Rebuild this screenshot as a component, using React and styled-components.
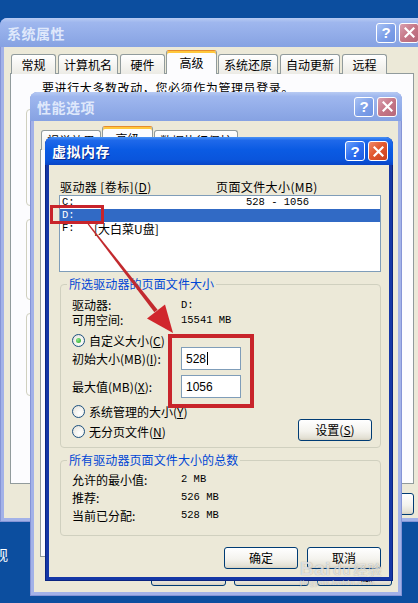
import React from "react";
import styled, { createGlobalStyle } from "styled-components";

const GlobalStyle = createGlobalStyle`
  html, body { margin: 0; padding: 0; background: #0c4e9f; }
  * { box-sizing: border-box; }
`;

const FONT = `"Noto Sans CJK SC", "Liberation Sans", sans-serif`;
const MONO = `"Liberation Mono", "Noto Sans CJK SC", monospace`;

const Desktop = styled.div`
  position: relative;
  width: 418px;
  height: 603px;
  overflow: hidden;
  background: #0c4e9f;
  font-family: ${FONT};
  font-size: 12px;
  color: #000;
`;

const DesktopLabel = styled.div`
  position: absolute;
  left: -6px;
  top: 546px;
  color: #fff;
  font-size: 14px;
  line-height: 16px;
`;

const Window = styled.div`
  position: absolute;
  z-index: ${(p) => p.$z};
  left: ${(p) => p.$x}px;
  top: ${(p) => p.$y}px;
  width: ${(p) => p.$w}px;
  height: ${(p) => p.$h}px;
  display: flex;
  flex-direction: column;
  padding: 0 4px 4px;
  border-radius: 8px 8px 0 0;
  background: ${(p) => (p.$active ? "#1537a6" : "#a3b2e8")};
  box-shadow: ${(p) =>
    p.$active
      ? "inset 1px 0 0 #0a2480, inset -1px 0 0 #0a2480, inset 0 -1px 0 #0a2480"
      : "inset 1px 0 0 #8594d6, inset -1px 0 0 #8594d6, inset 0 -1px 0 #8594d6"};
`;

const TitleBar = styled.div`
  height: ${(p) => p.$h}px;
  margin: 0 -4px;
  padding: 0 5px 0 7px;
  display: flex;
  align-items: center;
  gap: 3px;
  border-radius: 7px 7px 0 0;
  background: ${(p) =>
    p.$active
      ? "linear-gradient(180deg, #4a93f5 0%, #1f69ea 12%, #0b5be3 45%, #0a55dc 80%, #0845c6 100%)"
      : "linear-gradient(180deg, #b8cbf3 0%, #9fb7ee 15%, #93ade9 55%, #86a2e2 100%)"};
`;

const Title = styled.div`
  flex: 1;
  font-weight: bold;
  font-size: 14px;
  letter-spacing: 0.5px;
  color: ${(p) => (p.$active ? "#ffffff" : "#dfe8fb")};
  text-shadow: ${(p) => (p.$active ? "1px 1px 0 #0a2a8a" : "none")};
`;

const CapButton = styled.div`
  width: 20px;
  height: 20px;
  border: 1px solid #ffffff;
  border-radius: 3px;
  display: flex;
  align-items: center;
  justify-content: center;
  color: #fff;
  font: bold 15px "Liberation Sans", sans-serif;
  background: ${(p) => {
    if (p.$kind === "close")
      return p.$active
        ? "linear-gradient(135deg, #f08a6a 0%, #e2582f 45%, #c9401e 100%)"
        : "linear-gradient(135deg, #d9a0b0 0%, #c57686 50%, #b6677a 100%)";
    return p.$active
      ? "linear-gradient(135deg, #6ea2fb 0%, #2e6ff0 50%, #1d5be0 100%)"
      : "linear-gradient(135deg, #a9c2f4 0%, #7d9fe8 55%, #6e92e2 100%)";
  }};
`;

const Body = styled.div`
  flex: 1;
  min-height: 0;
  display: flex;
  flex-direction: column;
  background: #ece9d8;
  padding: ${(p) => p.$pad};
`;

const TabRow = styled.div`
  position: relative;
  z-index: 1;
  display: flex;
  align-items: flex-end;
  gap: 2px;
  height: 23px;
  margin-bottom: -1px;
  padding-left: 1px;
`;

const Tab = styled.div`
  height: ${(p) => (p.$sel ? 24 : 20)}px;
  min-width: ${(p) => (p.$sel ? 51 : 45)}px;
  padding: 0 ${(p) => (p.$sel ? 7 : 5)}px;
  margin: 0 ${(p) => (p.$sel ? -1 : 0)}px;
  display: flex;
  align-items: center;
  justify-content: center;
  border: 1px solid #919b9c;
  border-top-color: ${(p) => (p.$sel ? "#e68b2c" : "#919b9c")};
  border-bottom: none;
  border-radius: 3px 3px 0 0;
  background: ${(p) => (p.$sel ? "#fcfcfe" : "linear-gradient(180deg, #ffffff, #ecebe5)")};
  box-shadow: ${(p) => (p.$sel ? "inset 0 2px 0 #ffc83c" : "none")};
  line-height: 14px;
  white-space: nowrap;
`;

const Panel = styled.div`
  height: ${(p) => p.$h}px;
  background: #fcfcfe;
  border: 1px solid #919b9c;
  display: flex;
  flex-direction: column;
  padding: ${(p) => p.$pad || "0"};
`;

const Notice = styled.div`
  line-height: 16px;
  letter-spacing: 0.6px;
  padding: 6px 0 0 16px;
`;

const Group = styled.fieldset`
  margin: ${(p) => p.$m || "0"};
  padding: ${(p) => p.$pad || "0"};
  height: ${(p) => (p.$h ? `${p.$h}px` : "auto")};
  border: 1px solid #d0d0bf;
  border-radius: 4px;
  min-width: 0;
`;

const Legend = styled.legend`
  margin-left: 6px;
  padding: 0 2px;
  line-height: 14px;
  color: #0046d5;
  letter-spacing: 0.1px;
`;

const ButtonRow = styled.div`
  display: flex;
  justify-content: flex-end;
  gap: ${(p) => p.$gap || 8}px;
  margin-top: ${(p) => p.$mt}px;
`;

const Button = styled.div`
  width: ${(p) => p.$w || 74}px;
  height: 22px;
  display: flex;
  align-items: center;
  justify-content: center;
  border: 1px solid #003c74;
  border-radius: 3px;
  background: linear-gradient(180deg, #ffffff 0%, #f4f3ee 55%, #e3e0d4 90%, #d6d0c0 100%);
  line-height: 14px;
`;

const ListHeader = styled.div`
  display: flex;
  height: 16px;
  line-height: 16px;
  padding-left: 1px;
  letter-spacing: 0.4px;
`;

const HeaderCell = styled.div`
  width: ${(p) => (p.$w ? `${p.$w}px` : "auto")};
  white-space: nowrap;
`;

const ListBox = styled.div`
  height: 77px;
  background: #fff;
  border: 1px solid #7f9db9;
`;

const ListRow = styled.div`
  height: 13px;
  display: grid;
  grid-template-columns: 32px 152px 1fr;
  align-items: center;
  padding-left: 2px;
  background: ${(p) => (p.$sel ? "#316ac5" : "transparent")};
  color: ${(p) => (p.$sel ? "#fff" : "#000")};
  line-height: 13px;
`;

const Mono = styled.span`
  font-family: ${MONO};
  font-size: 10.5px;
`;

const InfoGrid = styled.div`
  display: grid;
  grid-template-columns: 109px 1fr;
  grid-auto-rows: ${(p) => p.$row}px;
  align-items: center;
  padding: ${(p) => p.$pad};
  white-space: nowrap;
`;

const RadioRow = styled.div`
  display: flex;
  align-items: center;
  height: 14px;
  margin-top: ${(p) => p.$mt || 0}px;
  padding-left: 11px;
  white-space: nowrap;
`;

const Radio = styled.span`
  position: relative;
  width: 13px;
  height: 13px;
  margin-right: 4px;
  border-radius: 50%;
  border: 1px solid #1c5180;
  background: radial-gradient(circle at 60% 65%, #ffffff 0%, #f2f1ec 50%, #dcdbd2 100%);
  flex: none;
  &::after {
    content: "";
    display: ${(p) => (p.$on ? "block" : "none")};
    position: absolute;
    left: 3px;
    top: 3px;
    width: 5px;
    height: 5px;
    border-radius: 50%;
    background: radial-gradient(circle at 35% 35%, #8ee88a, #21a121);
  }
`;

const FieldRow = styled.div`
  display: grid;
  grid-template-columns: 109px 60px;
  align-items: center;
  height: 23px;
  margin-top: ${(p) => p.$mt || 0}px;
  padding-left: 11px;
  white-space: nowrap;
`;

const TextBox = styled.div`
  height: 23px;
  background: #fff;
  border: 1px solid #7f9db9;
  padding: 0 4px;
  display: flex;
  align-items: center;
  font-family: "Liberation Sans", sans-serif;
  font-size: 12px;
`;

const Caret = styled.span`
  display: inline-block;
  width: 1px;
  height: 13px;
  margin-left: 1px;
  background: #000;
`;

const BottomBlock = styled.div`
  display: flex;
  justify-content: space-between;
  align-items: flex-end;
  margin-top: 6px;
  padding-right: 8px;
`;

const RadioStack = styled.div`
  display: flex;
  flex-direction: column;
  gap: 6px;
  margin-bottom: 3px;
`;

const Annotation = styled.div`
  position: absolute;
  z-index: 10;
  left: ${(p) => p.$x}px;
  top: ${(p) => p.$y}px;
  width: ${(p) => p.$w}px;
  height: ${(p) => p.$h}px;
  border: ${(p) => p.$b}px solid #c8242b;
  pointer-events: none;
`;

const Overlay = styled.svg`
  position: absolute;
  z-index: 10;
  left: 0;
  top: 0;
  pointer-events: none;
`;

const Watermark = styled.div`
  position: absolute;
  z-index: 11;
  left: 300px;
  top: 558px;
  color: rgba(255, 255, 255, 0.7);
  font: bold 19px "Liberation Sans", sans-serif;
  text-shadow: 0 0 1px rgba(90, 90, 90, 0.6);
  letter-spacing: 0.5px;
  pointer-events: none;
  span {
    font-family: ${FONT};
    font-size: 14px;
    font-weight: normal;
    margin-left: 2px;
  }
  div {
    font: 8px "Liberation Sans", sans-serif;
    letter-spacing: 0.6px;
    margin-top: -2px;
    color: rgba(255, 255, 255, 0.7);
  }
`;

function Caption({ active }) {
  return (
    <>
      <CapButton $kind="help" $active={active}>?</CapButton>
      <CapButton $kind="close" $active={active}>
        <svg width="11" height="11" viewBox="0 0 11 11">
          <path d="M1.5 1.5 L9.5 9.5 M9.5 1.5 L1.5 9.5" stroke="#fff" strokeWidth="2.2" strokeLinecap="square" />
        </svg>
      </CapButton>
    </>
  );
}

const sysTabs = ["常规", "计算机名", "硬件", "高级", "系统还原", "自动更新", "远程"];
const perfTabs = ["视觉效果", "高级", "数据执行保护"];

export default function App() {
  return (
    <Desktop>
      <GlobalStyle />
      <DesktopLabel>观</DesktopLabel>

      {/* 系统属性 */}
      <Window $z={1} $x={0} $y={18} $w={424} $h={504}>
        <TitleBar $h={29}>
          <Title>系统属性</Title>
          <Caption />
        </TitleBar>
        <Body $pad="4px 6px 0 6px">
          <TabRow>
            {sysTabs.map((t) => (
              <Tab key={t} $sel={t === "高级"}>{t}</Tab>
            ))}
          </TabRow>
          <Panel $h={411} $pad="0 12px 0 15px">
            <Notice>要进行大多数改动，您必须作为管理员登录。</Notice>
            <Group $m="6px 0 0" $h={104}><Legend>性能</Legend></Group>
            <Group $m="6px 0 0" $h={88}><Legend>用户配置文件</Legend></Group>
            <Group $m="6px 0 0" $h={90}><Legend>启动和故障恢复</Legend></Group>
          </Panel>
          <ButtonRow $mt={9} $gap={6}>
            <Button>确定</Button>
            <Button>取消</Button>
            <Button>应用(<u>A</u>)</Button>
          </ButtonRow>
        </Body>
      </Window>

      {/* 性能选项 */}
      <Window $z={2} $x={30} $y={92} $w={372} $h={504}>
        <TitleBar $h={29}>
          <Title>性能选项</Title>
          <Caption />
        </TitleBar>
        <Body $pad="6px 6px 0 6px">
          <TabRow>
            {perfTabs.map((t) => (
              <Tab key={t} $sel={t === "高级"}>{t}</Tab>
            ))}
          </TabRow>
          <Panel $h={408} />
          <ButtonRow $mt={7} $gap={8}>
            <Button $w={75}>确定</Button>
            <Button $w={75}>取消</Button>
            <Button $w={75}>应用(<u>A</u>)</Button>
          </ButtonRow>
        </Body>
      </Window>

      {/* 虚拟内存 */}
      <Window $z={3} $x={45} $y={137} $w={348} $h={444} $active>
        <TitleBar $h={28} $active>
          <Title $active>虚拟内存</Title>
          <Caption active />
        </TitleBar>
        <Body $pad="14px 8px 0 10px">
          <ListHeader>
            <HeaderCell $w={156}>驱动器 [卷标](<u>D</u>)</HeaderCell>
            <HeaderCell>页面文件大小(MB)</HeaderCell>
          </ListHeader>
          <ListBox>
            <ListRow>
              <Mono>C:</Mono>
              <span />
              <Mono>528 - 1056</Mono>
            </ListRow>
            <ListRow $sel>
              <Mono>D:</Mono>
              <span />
              <span />
            </ListRow>
            <ListRow>
              <Mono>F:</Mono>
              <span>[大白菜U盘]</span>
              <span />
            </ListRow>
          </ListBox>

          <Group $m="5px 0 0 1px" $pad="0 0 6px">
            <Legend>所选驱动器的页面文件大小</Legend>
            <InfoGrid $row={15} $pad="6px 0 0 11px">
              <span>驱动器:</span>
              <Mono>D:</Mono>
              <span>可用空间:</span>
              <Mono>15541 MB</Mono>
            </InfoGrid>
            <RadioRow $mt={6}>
              <Radio $on />
              自定义大小(<u>C</u>)
            </RadioRow>
            <FieldRow>
              <span>初始大小(MB)(<u>I</u>):</span>
              <TextBox>528<Caret /></TextBox>
            </FieldRow>
            <FieldRow $mt={5}>
              <span>最大值(MB)(<u>X</u>):</span>
              <TextBox>1056</TextBox>
            </FieldRow>
            <BottomBlock>
              <RadioStack>
                <RadioRow>
                  <Radio />
                  系统管理的大小(<u>Y</u>)
                </RadioRow>
                <RadioRow>
                  <Radio />
                  无分页文件(<u>N</u>)
                </RadioRow>
              </RadioStack>
              <Button>设置(<u>S</u>)</Button>
            </BottomBlock>
          </Group>

          <Group $m="5px 0 0 1px" $pad="0 0 11px">
            <Legend>所有驱动器页面文件大小的总数</Legend>
            <InfoGrid $row={18} $pad="3px 0 0 11px">
              <span>允许的最小值:</span>
              <Mono>2 MB</Mono>
              <span>推荐:</span>
              <Mono>526 MB</Mono>
              <span>当前已分配:</span>
              <Mono>528 MB</Mono>
            </InfoGrid>
          </Group>

          <ButtonRow $mt={11} $gap={9}>
            <Button>确定</Button>
            <Button>取消</Button>
          </ButtonRow>
        </Body>
      </Window>

      <Annotation $x={50} $y={205} $w={54} $h={19} $b={3} />
      <Annotation $x={168} $y={334} $w={86} $h={74} $b={4} />

      <Overlay width="418" height="603" viewBox="0 0 418 603">
        <polygon points="88.8,223.7 157.6,309.8 154.4,312.3 87.6,224.3" fill="#c22a2e" />
        <polygon points="165,304.5 147,318.5 173,333" fill="#d0262c" />
      </Overlay>

      <Watermark>
        Bai<span>du</span><span>经验</span>
        <div>jingyan.baidu.com</div>
      </Watermark>
    </Desktop>
  );
}
